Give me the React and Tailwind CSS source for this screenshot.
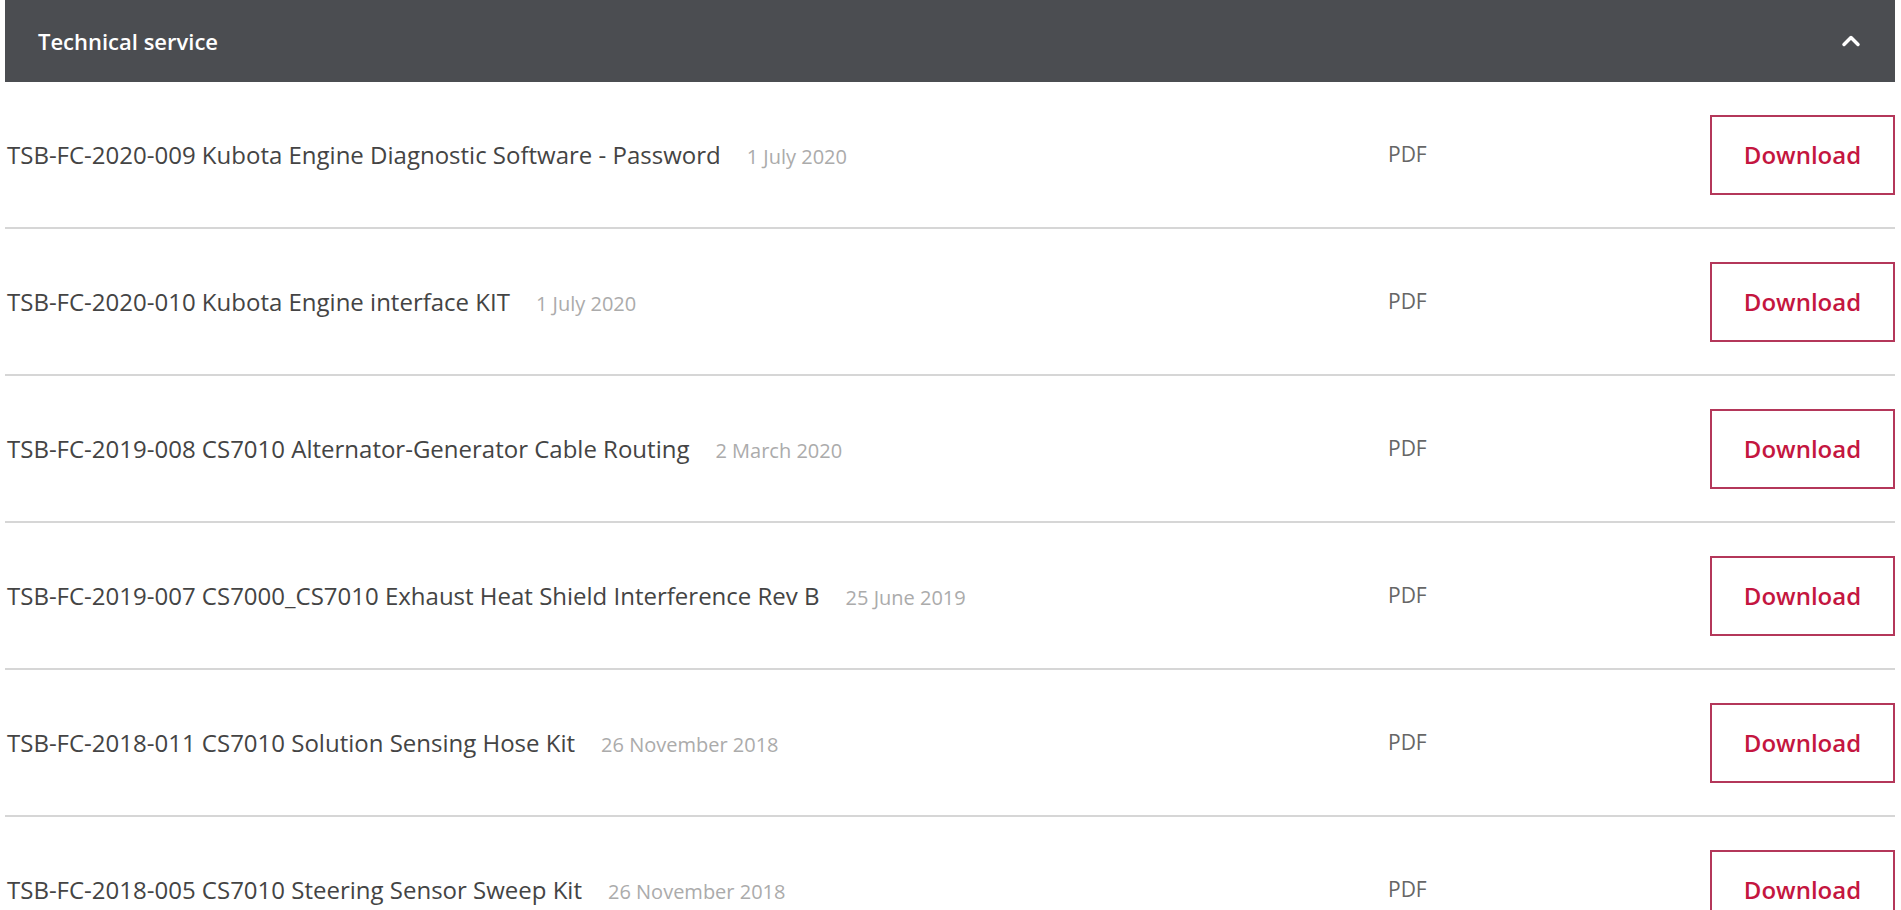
import { ChevronUp } from 'lucide-react';

const documents = [
  { title: 'TSB-FC-2020-009 Kubota Engine Diagnostic Software - Password', date: '1 July 2020' },
  { title: 'TSB-FC-2020-010 Kubota Engine interface KIT', date: '1 July 2020' },
  { title: 'TSB-FC-2019-008 CS7010 Alternator-Generator Cable Routing', date: '2 March 2020' },
  { title: 'TSB-FC-2019-007 CS7000_CS7010 Exhaust Heat Shield Interference Rev B', date: '25 June 2019' },
  { title: 'TSB-FC-2018-011 CS7010 Solution Sensing Hose Kit', date: '26 November 2018' },
  { title: 'TSB-FC-2018-005 CS7010 Steering Sensor Sweep Kit', date: '26 November 2018' },
];

const DocumentRow = ({ doc }) => (
  <div className="flex items-center h-[147px] border-b-2 border-[#d6d6d6]">
    <div className="flex-1 flex items-baseline pl-[2px]">
      <span className="text-[24px] text-[#444444]">{doc.title}</span>
      <span className="ml-[26px] text-[20px] text-[#ababab]">{doc.date}</span>
    </div>
    <div className="w-[322px] text-[21px] text-[#666666]">PDF</div>
    <button
      type="button"
      className="w-[185px] h-[80px] border-2 border-[#b4375a] text-[#c4163f] text-[24px] font-semibold"
    >
      Download
    </button>
  </div>
);

export default function App() {
  return (
    <div className="min-h-screen bg-white pl-[5px] pr-[6px]" style={{ fontFamily: "'Open Sans', 'Noto Sans', sans-serif" }}>
      {/* Accordion header */}
      <div className="flex items-center justify-between h-[82px] bg-[#4b4d51] pl-[33px] pr-[30px]">
        <h2 className="text-[22px] font-semibold text-white">Technical service</h2>
        <ChevronUp className="w-7 h-7 text-white" strokeWidth={3} />
      </div>

      {/* Document list */}
      <div>
        {documents.map((doc, index) => (
          <DocumentRow key={index} doc={doc} />
        ))}
      </div>
    </div>
  );
}
